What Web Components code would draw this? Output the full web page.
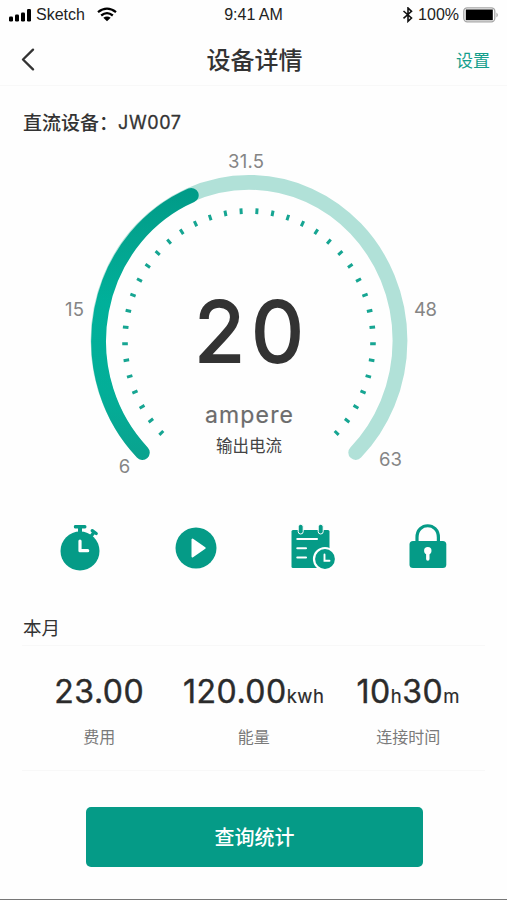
<!DOCTYPE html>
<html lang="zh-CN">
<head>
<meta charset="utf-8">
<title>设备详情</title>
<style>
html,body{margin:0;background:#fefefe}
body{width:507px;height:900px;overflow:hidden;font-family:Inter,"Noto Sans CJK SC",sans-serif;color:#333}
</style>
</head>
<body>
<device-page></device-page>
<script>
const define = (name, html) => {
  const t = document.createElement('template');
  t.innerHTML = html;
  customElements.define(name, class extends HTMLElement {
    constructor() {
      super();
      this.attachShadow({mode: 'open'}).append(t.content.cloneNode(true));
    }
  });
};

define('status-bar', `
<style>
:host{display:grid;grid-template-columns:1fr auto 1fr;align-items:center;height:30px;padding:0 8px;box-sizing:border-box;font:16px/30px "Liberation Sans",sans-serif;color:#222}
div{display:flex;align-items:center;height:30px}
.r{justify-content:flex-end}
svg{display:block;flex:none}
</style>
<div>
  <svg width="24" height="16" viewBox="0 0 24 16" fill="#000"><rect x="1" y="9.500" width="4" height="5" rx="1.200"/><rect x="7" y="7.500" width="4" height="7" rx="1.200"/><rect x="13" y="5.500" width="4" height="9" rx="1.200"/><rect x="19" y="2" width="4" height="12.500" rx="1.200"/></svg>
  <span style="margin-left:4px;width:49px">Sketch</span>
  <svg style="margin-left:12px" width="20" height="16" viewBox="0 0 20 16" fill="none" stroke="#000" stroke-width="2.300"><path d="M1 5.100Q10-1.900 19 5.100M4.200 8.500Q10 3.700 15.800 8.500"/><path fill="#000" stroke="none" d="M6.300 10.800Q10 8.100 13.700 10.800L10 14.300z"/></svg>
</div>
<span>9:41 AM</span>
<div class="r">
  <svg width="12" height="16" viewBox="0 0 12 16" fill="none" stroke="#111" stroke-width="1.600"><path d="M1.500 4 9.500 11 6 14.300V1L9.500 4.300 1.500 11.400"/></svg>
  <span style="margin-left:4px;margin-right:1px">100%</span>
  <svg style="margin:0 0 0 3px" width="36" height="16" viewBox="0 0 36 16"><rect x=".8" y=".8" width="31" height="14" rx="3.500" fill="#fff" stroke="#a5a5a5" stroke-width="1.300"/><rect x="2.800" y="2.500" width="27" height="10.700" fill="#000"/><path d="M33.500 5.500Q36 8 33.500 10.500z" fill="#999"/></svg>
</div>`);

define('nav-bar', `
<style>
:host{display:grid;grid-template-columns:1fr auto 1fr;align-items:center;height:56px;padding:0 17px 0 21px;box-sizing:border-box;border-bottom:1px solid #f8f8f8}
h1{margin:0 2px 0 0;font:500 24px/56px "Noto Sans CJK SC",sans-serif}
.act{justify-self:end;font:17px/56px "Noto Sans CJK SC",sans-serif;color:#159f8c;padding-top:2px}
svg{display:block}
</style>
<svg width="14" height="23" viewBox="0 0 14 23" fill="none" stroke="#333" stroke-width="2.300" stroke-linecap="round" stroke-linejoin="round"><path d="M12 1.600 2 11.500 12 21.400"/></svg>
<h1><slot></slot></h1>
<div class="act"><slot name="action"></slot></div>`);

define('device-title', `
<style>
:host{display:flex;align-items:center;padding:14px 0 0 23px;box-sizing:border-box;height:58px;font:500 19px/30px "Noto Sans CJK SC",sans-serif}
.m{font:400 18px/30px Inter,sans-serif;letter-spacing:.6px;-webkit-text-stroke:.3px #333;padding-top:1px}
</style>
<span><slot></slot></span><span class="m"><slot name="model"></slot></span>`);

customElements.define('current-gauge', class extends HTMLElement {
  connectedCallback() {
    const cx = 249, cy = 341;
    let ticks = '';
    for (let i = 0; i < 38; i++) {
      const a = (-135 + i * 270 / 37) * Math.PI / 180, s = Math.sin(a), c = Math.cos(a);
      const p = d => (cx + (124 + d) * s).toFixed(2) + ' ' + (cy - (130 + d) * c).toFixed(2);
      ticks += 'M' + p(-2.8) + 'L' + p(2.8);
    }
    this.attachShadow({mode: 'open'}).innerHTML = `
<style>
:host{display:block;height:346px}
svg{display:block}
text{text-anchor:middle}
.l{font:18.500px Inter,sans-serif;fill:#858585}
</style>
<svg width="507" height="346" viewBox="0 144 507 346">
<defs><linearGradient id="g" gradientUnits="userSpaceOnUse" x1="0" y1="190" x2="0" y2="460"><stop offset="0" stop-color="#009b88"/><stop offset=".18" stop-color="#03a48f"/><stop offset=".42" stop-color="#00b09a"/><stop offset=".75" stop-color="#03ae98"/><stop offset="1" stop-color="#0aa28e"/></linearGradient></defs>
<g fill="none" stroke-width="14.800" stroke-linecap="round">
<path stroke="#b1e1d8" d="M142.300 452.500A151 158.200 0 1 1 355.700 452.500"/>
<path stroke="url(#g)" d="M142.300 452.500A151 158.200 0 0 1 191.300 195.300"/>
</g>
<path d="${ticks}" fill="none" stroke="#16a592" stroke-width="3"/>
<text class="l" x="246" y="168" textLength="36">31.5</text>
<text class="l" x="74.500" y="316" textLength="19">15</text>
<text class="l" x="425.500" y="316" textLength="23">48</text>
<text class="l" x="124.500" y="472.500">6</text>
<text class="l" x="390.500" y="466" textLength="23">63</text>
<text x="249" y="361.800" textLength="110" style="font:400 84px Inter,sans-serif" fill="#333" stroke="#333" stroke-width="1.800">20</text>
<text x="249" y="422.500" textLength="88" style="font:400 23px Inter,sans-serif" fill="#6c6c6c" stroke="#6c6c6c" stroke-width=".2">ampere</text>
<text x="249" y="451.500" style="font:16.500px 'Noto Sans CJK SC',sans-serif" fill="#444">输出电流</text>
</svg>`;
  }
});

define('quick-actions', `
<style>
:host{display:grid;grid-template-columns:repeat(4,116px);justify-content:center;align-items:center;height:116px;padding:0 0 2px 1px;box-sizing:border-box}
svg{display:block;margin:auto}
</style>
<svg width="48" height="52" viewBox="56.500 521 48 52" fill="#059b87"><circle cx="80.500" cy="551" r="19.500"/><path d="M75.500 525H85.500Q87 525 87 526.800 87 528.600 85.500 528.600H82.500V533H78.500V528.600H75.500Q74.300 528.600 74.300 526.800 74.300 525 75.500 525z"/><path d="M92.700 530.700 96.700 533.500M94.500 532.200 91 537" fill="none" stroke="#059b87" stroke-width="3.300" stroke-linecap="round"/><path d="M80.500 541V550.700H88.200" fill="none" stroke="#fff" stroke-width="3.200" stroke-linecap="round" stroke-linejoin="round"/></svg>
<svg width="48" height="52" viewBox="172.500 521 48 52"><circle cx="196.500" cy="548" r="20.500" fill="#059b87"/><path d="M193 539.500V556.500L205.200 548z" fill="#fff" stroke="#fff" stroke-width="2" stroke-linejoin="round"/></svg>
<svg width="48" height="52" viewBox="288.500 521 48 52"><rect x="292" y="530" width="38" height="38" rx="1.500" fill="#059b87"/><g fill="#059b87" stroke="#fff" stroke-width="1"><rect x="298.700" y="524.300" width="5" height="9.700" rx="2.500"/><rect x="318.700" y="524.300" width="5" height="9.700" rx="2.500"/></g><path d="M297.800 539H317.500M297.800 548.200H306.500M297.800 557.500H306.500" stroke="#fff" stroke-width="2.100" stroke-linecap="round"/><circle cx="325.500" cy="559" r="11" fill="#059b87" stroke="#fff" stroke-width="2.200"/><path d="M325 554.500V560.700H330" fill="none" stroke="#fff" stroke-width="1.900" stroke-linecap="round"/></svg>
<svg width="48" height="52" viewBox="404.500 521 48 52"><path d="M417.500 542V537.500C417.500 521.800 438.900 521.800 438.900 537.500V542" fill="none" stroke="#059b87" stroke-width="3.200"/><rect x="410" y="541" width="36.800" height="27" rx="3.500" fill="#059b87"/><circle cx="428.300" cy="550.700" r="3.700" fill="#fff"/><path d="M428.300 552V559" stroke="#fff" stroke-width="3.400" stroke-linecap="round"/></svg>`);

define('month-section', `
<style>
:host{display:block;height:165px;margin:0 22px;box-sizing:border-box;border-bottom:1px solid #f8f8f8}
h2{margin:0;height:40px;box-sizing:border-box;border-bottom:1px solid #f8f8f8;font:400 18.500px/42px "Noto Sans CJK SC",sans-serif;text-indent:1px}
.g{display:grid;grid-template-columns:repeat(3,154.500px)}
</style>
<h2><slot name="heading"></slot></h2>
<div class="g"><slot></slot></div>`);

define('stat-item', `
<style>
:host{display:flex;flex-direction:column;align-items:center;padding-top:26px;white-space:nowrap}
.v{height:40px;font:400 32px/40px Inter,sans-serif;letter-spacing:.5px;color:#2b2b2b;-webkit-text-stroke:.4px #2b2b2b}
.c{margin-top:12px;font:16px/24px "Noto Sans CJK SC",sans-serif;color:#7a7a7a}
::slotted(small){font-size:18.500px;line-height:1;-webkit-text-stroke:.2px #2b2b2b}
::slotted([slot=caption]){display:block}
</style>
<div class="v"><slot></slot></div><div class="c"><slot name="caption"></slot></div>`);

define('primary-button', `
<style>
:host{display:block;margin:36px 84px 0 86px}
button{display:block;width:100%;height:60px;border:0;border-radius:5px;padding:0;background:#059b87;color:#fff;font:500 20px/60px "Noto Sans CJK SC",sans-serif}
</style>
<button><slot></slot></button>`);

define('device-page', `
<style>
:host{display:flex;flex-direction:column;width:507px;height:900px;box-sizing:border-box;border-bottom:1px solid #777}
</style>
<status-bar></status-bar>
<nav-bar>设备详情<span slot="action">设置</span></nav-bar>
<device-title>直流设备：<span slot="model">JW007</span></device-title>
<current-gauge></current-gauge>
<quick-actions></quick-actions>
<month-section><span slot="heading">本月</span>
<stat-item>23.00<span slot="caption">费用</span></stat-item>
<stat-item>120.00<small>kwh</small><span slot="caption">能量</span></stat-item>
<stat-item>10<small>h</small>30<small>m</small><span slot="caption">连接时间</span></stat-item>
</month-section>
<primary-button>查询统计</primary-button>`);
</script>
</body>
</html>
